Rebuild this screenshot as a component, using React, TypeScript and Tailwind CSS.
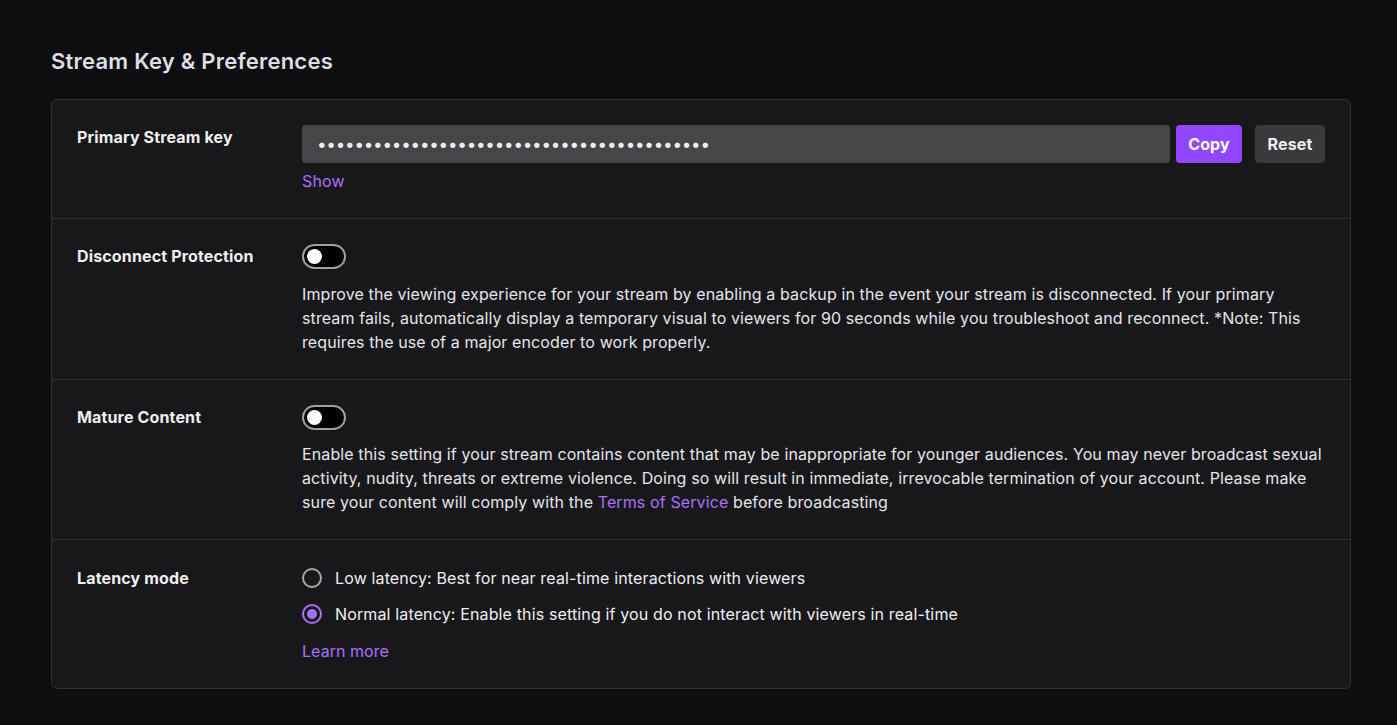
import React from 'react';

function Toggle() {
  return (
    <div className="w-[44px] h-[25px] rounded-full border-2 border-[#a0a0a0] bg-black flex items-center pl-[3px]">
      <div className="w-[15px] h-[15px] rounded-full bg-white" />
    </div>
  );
}

function Radio({ checked, label }: { checked?: boolean; label: string }) {
  return (
    <div className="flex items-center h-[24px]">
      {checked ? (
        <div className="w-[20px] h-[20px] rounded-full border-2 border-[#a970ff] flex items-center justify-center shrink-0">
          <div className="w-[10px] h-[10px] rounded-full bg-[#a970ff]" />
        </div>
      ) : (
        <div className="w-[20px] h-[20px] rounded-full border-2 border-[#a8a8ad] shrink-0" />
      )}
      <span className="ml-[13px] text-[#efeff1]">{label}</span>
    </div>
  );
}

function Row({ label, children, last, className }: { label: string; children: React.ReactNode; last?: boolean; className?: string }) {
  return (
    <div className={`flex pl-[25px] pr-[25px] ${last ? '' : 'border-b border-[#2f2f33]'} ${className ?? ''}`}>
      <div className="w-[225px] shrink-0 font-bold tracking-[0.15px] text-[#efeff1] leading-[24px]">{label}</div>
      <div className="flex-1 min-w-0">{children}</div>
    </div>
  );
}

export default function App() {
  return (
    <div className="min-h-[725px] bg-[#0e0e10] px-[51px] pt-[44px] pb-[36px] text-[16px] leading-[24px] tracking-[0.14px] font-['Inter',sans-serif]">
      <h2 className="text-[22px] leading-[34px] font-semibold tracking-[0.23px] text-[#dedee3]">Stream Key &amp; Preferences</h2>
      <div className="mt-[21px] w-[1300px] rounded-[6px] border border-[#2f2f33] bg-[#18181b]">
        <Row label="Primary Stream key" className="h-[119px] pt-[25px]">
          <div className="flex items-center">
            <div className="h-[38px] flex-1 rounded-[4px] bg-[#464649] pl-[15px] flex items-center text-[#efeff1] text-[17px] tracking-[-0.21px]">
              {'•'.repeat(42)}
            </div>
            <button className="ml-[6px] h-[38px] w-[66px] rounded-[4px] bg-[#9147ff] font-bold text-white">Copy</button>
            <button className="ml-[13px] h-[38px] w-[70px] rounded-[4px] bg-[#3a3a3d] font-bold text-[#efeff1]">Reset</button>
          </div>
          <div className="mt-[6px] text-[#a970ff]">Show</div>
        </Row>
        <Row label="Disconnect Protection" className="h-[161px] pt-[25px]">
          <Toggle />
          <p className="mt-[13px] text-[#e5e5ea] tracking-[0.11px]">
            Improve the viewing experience for your stream by enabling a backup in the event your stream is disconnected. If your primary stream fails, automatically display a temporary visual to viewers for 90 seconds while you troubleshoot and reconnect. *Note: This requires the use of a major encoder to work properly.
          </p>
        </Row>
        <Row label="Mature Content" className="h-[160px] pt-[25px]">
          <Toggle />
          <p className="mt-[12px] text-[#e5e5ea] tracking-[0.11px]">
            Enable this setting if your stream contains content that may be inappropriate for younger audiences. You may never broadcast sexual activity, nudity, threats or extreme violence. Doing so will result in immediate, irrevocable termination of your account. Please make sure your content will comply with the <span className="text-[#a970ff]">Terms of Service</span> before broadcasting
          </p>
        </Row>
        <Row label="Latency mode" last className="h-[148px] pt-[26px]">
          <Radio label="Low latency: Best for near real-time interactions with viewers" />
          <div className="mt-[12px]">
            <Radio checked label="Normal latency: Enable this setting if you do not interact with viewers in real-time" />
          </div>
          <div className="mt-[13px] text-[#a970ff] tracking-[0.05px]">Learn more</div>
        </Row>
      </div>
    </div>
  );
}
